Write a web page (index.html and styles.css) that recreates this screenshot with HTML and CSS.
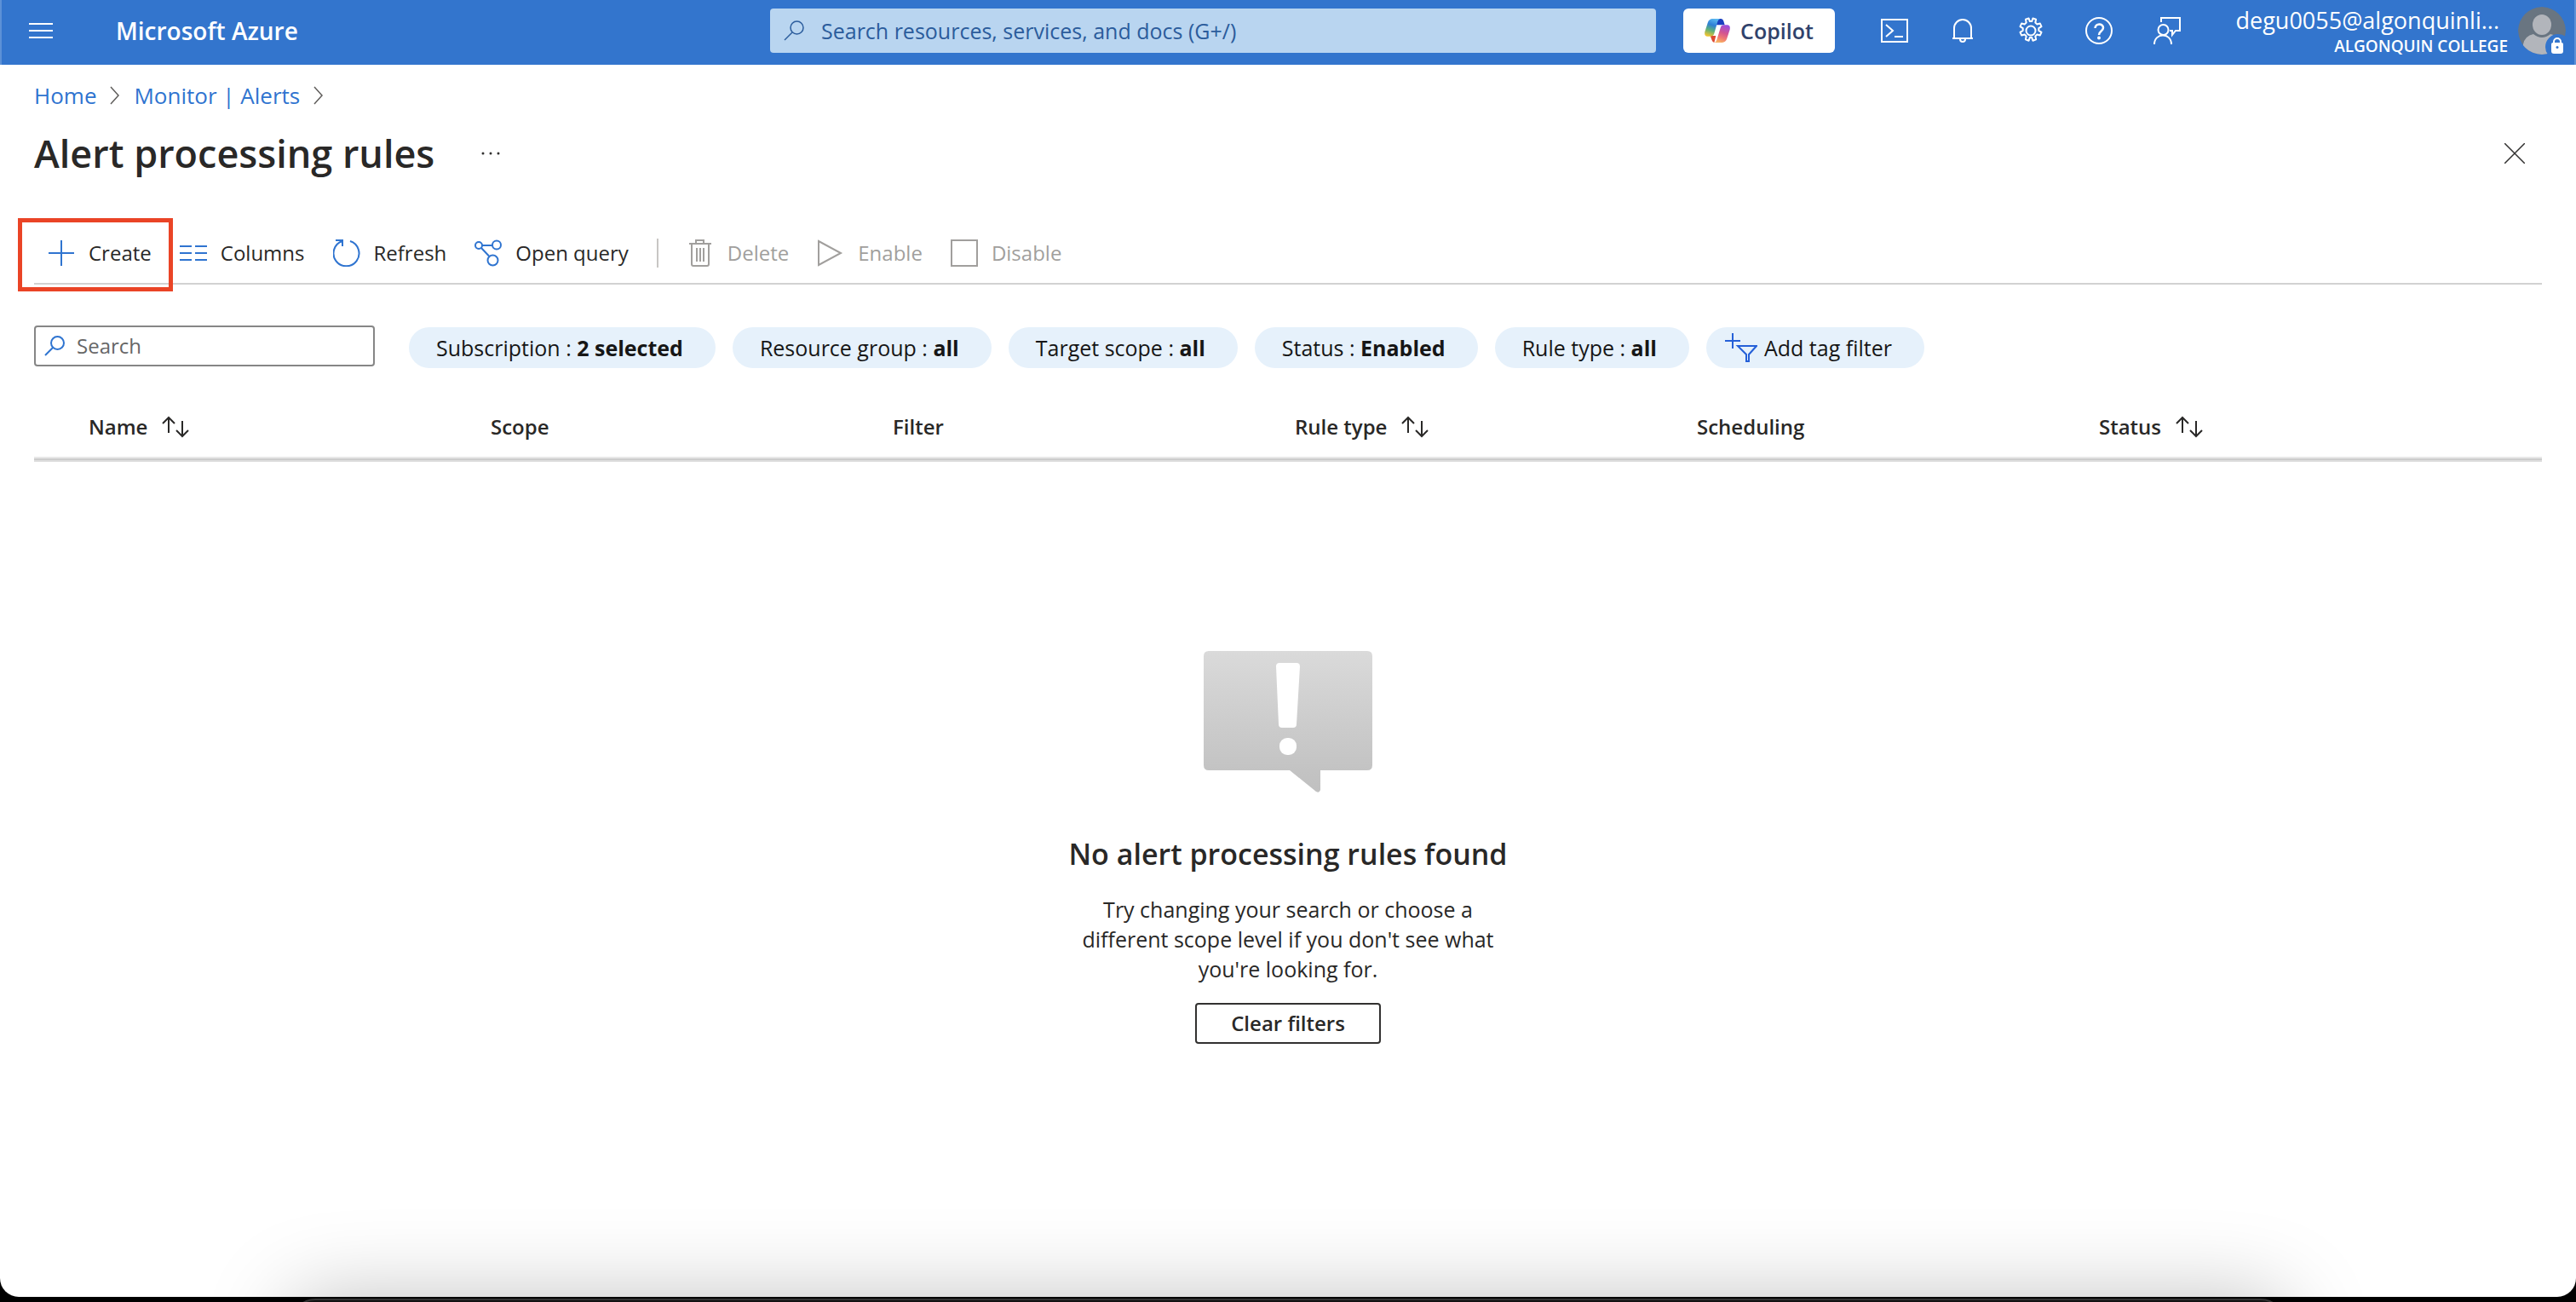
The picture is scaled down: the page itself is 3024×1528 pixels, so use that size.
FILE: index.html
```html
<!DOCTYPE html>
<html lang="en">
<head>
<meta charset="utf-8">
<title>Alert processing rules - Microsoft Azure</title>
<link rel="stylesheet" href="styles.css">
</head>
<body>
<div class="window">
  <header class="topbar">
    <div class="topbar-start">
      <button class="menu-button" type="button" aria-label="Show portal menu">
        <svg width="28" height="18" viewBox="0 0 28 18" stroke="#fff" stroke-width="2"><path d="M0 1h28M0 9h28M0 17h28"/></svg>
      </button>
      <a class="brand" href="#">Microsoft Azure</a>
    </div>
    <label class="global-search">
      <svg width="24" height="24" viewBox="0 0 24 24" fill="none" stroke="#2b5c9c" stroke-width="1.5"><circle cx="15.500" cy="8.500" r="7.500"/><path d="M10 14L1 23"/></svg>
      <input type="text" placeholder="Search resources, services, and docs (G+/)" aria-label="Search resources, services, and docs">
    </label>
    <button class="copilot" type="button">
      <svg width="30" height="28" viewBox="0 0 90 84">
        <defs>
          <linearGradient id="cp-left" x1="0.600" y1="0" x2="0.300" y2="1"><stop offset="0" stop-color="#59b7f0"/><stop offset=".35" stop-color="#2f7fd6"/><stop offset=".65" stop-color="#5bb07c"/><stop offset="1" stop-color="#f0c431"/></linearGradient>
          <linearGradient id="cp-right" x1="0.700" y1="0" x2="0.400" y2="1"><stop offset="0" stop-color="#9a4fe0"/><stop offset=".45" stop-color="#d4548f"/><stop offset=".75" stop-color="#f07a72"/><stop offset="1" stop-color="#f8b263"/></linearGradient>
        </defs>
        <path d="M44 0h14q7 0 9 8l4 14H42z" fill="#1b3fc0"/>
        <path d="M20 60h20l-6 24q-6-1-8-8z" fill="#dd4a33"/>
        <path d="M28 0h27q-7 2-9 10L34 52q-3 10-12 10H10Q-2 61 1 46L12 12Q16 1 28 0z" fill="url(#cp-left)"/>
        <path d="M62 84H35q6-2 8-10L56 32q3-10 12-10h12q12 1 9 16L78 72q-4 11-16 12z" fill="url(#cp-right)"/>
      </svg>
      <span>Copilot</span>
    </button>
    <nav class="topbar-icons" aria-label="Portal tools">
      <button type="button" aria-label="Cloud Shell">
        <svg width="32" height="32" viewBox="0 0 32 32" fill="none" stroke="#fff" stroke-width="2"><path d="M1 3h30v26H1z"/><path d="M6 9l8 7-8 7M16 23h10"/></svg>
      </button>
      <button type="button" aria-label="Notifications">
        <svg width="32" height="32" viewBox="0 0 32 32" fill="none" stroke="#fff" stroke-width="2"><path d="M4 25h24M6 25V13a10 10 0 0 1 20 0v12M13 26a3 3 0 0 0 6 0"/></svg>
      </button>
      <button type="button" aria-label="Settings">
        <svg width="32" height="32" viewBox="0 0 32 32" fill="none" stroke="#fff" stroke-width="2" stroke-linejoin="round"><path d="M13.600 1.500l1.200 3.600h2.400l1.200-3.600 3.700 1.300-.8 3.700 1.900 1.900 3.700-.8 1.600 3.500-3.200 2.100v2.600l3.200 2.100-1.600 3.500-3.700-.8-1.900 1.900.8 3.700-3.700 1.500-1.200-3.600h-2.400l-1.200 3.600-3.700-1.500.8-3.700-1.900-1.900-3.700.8-1.600-3.500 3.200-2.100v-2.600l-3.200-2.100 1.600-3.500 3.700.8 1.900-1.900-.8-3.700z"/><circle cx="16" cy="16" r="5.500"/></svg>
      </button>
      <button type="button" aria-label="Help">
        <svg width="32" height="32" viewBox="0 0 32 32" fill="none" stroke="#fff"><circle cx="16" cy="16" r="15" stroke-width="2"/><path d="M11.500 13c0-6 9.500-6 9.500-.5 0 4-5 4-5 8.500" stroke-width="2.500"/><circle cx="16" cy="24.500" r="2" fill="#fff" stroke="none"/></svg>
      </button>
      <button type="button" aria-label="Feedback">
        <svg width="32" height="32" viewBox="0 0 32 32" fill="none" stroke="#fff" stroke-width="2"><path d="M9 6V1h22v15h-5l-4 5v-5h-3"/><circle cx="11.500" cy="15" r="6"/><path d="M1 32c0-14 20-14 20 0"/></svg>
      </button>
    </nav>
    <button class="account" type="button">
      <span class="account-text">
        <span class="account-mail">degu0055@algonquinli...</span>
        <span class="account-org">ALGONQUIN COLLEGE</span>
      </span>
      <svg width="56" height="56" viewBox="0 0 56 56">
        <defs><clipPath id="avatar-clip"><circle cx="28" cy="28" r="28"/></clipPath></defs>
        <g clip-path="url(#avatar-clip)">
          <circle cx="28" cy="28" r="28" fill="#697581"/>
          <path d="M6 56V44q2-10 12-12 10 8 20 0 12 2 13 12v12z" fill="#b2b5bb"/>
          <circle cx="28" cy="21" r="13" fill="#697581"/>
          <ellipse cx="28" cy="21" rx="11" ry="12" fill="#b2b5bb"/>
        </g>
        <circle cx="47" cy="47" r="15" fill="#3375cd"/>
        <path d="M39 44q0-2 2-2h10q2 0 2 2v8q0 3-3 3h-8q-3 0-3-3z" fill="#fff"/>
        <path d="M42 43v-2a4 4 0 0 1 8 0v2" fill="none" stroke="#fff" stroke-width="2"/>
        <circle cx="46" cy="47.500" r="1.500" fill="#3375cd"/>
      </svg>
    </button>
  </header>

  <main class="blade">
    <nav class="breadcrumb" aria-label="Breadcrumb">
      <a href="#">Home</a>
      <svg width="12" height="22" viewBox="0 0 12 22" fill="none" stroke="#605e5c" stroke-width="1.500"><path d="M1 1l9 10-9 10"/></svg>
      <a href="#">Monitor | Alerts</a>
      <svg width="12" height="22" viewBox="0 0 12 22" fill="none" stroke="#605e5c" stroke-width="1.500"><path d="M1 1l9 10-9 10"/></svg>
    </nav>

    <div class="title-row">
      <h1>Alert processing rules</h1>
      <button class="more" type="button" aria-label="More">
        <svg width="24" height="4" viewBox="0 0 24 4" fill="#323130"><circle cx="3" cy="2" r="1.500"/><circle cx="12" cy="2" r="1.500"/><circle cx="21" cy="2" r="1.500"/></svg>
      </button>
      <button class="close" type="button" aria-label="Close">
        <svg width="24" height="24" viewBox="0 0 24 24" stroke="#323130" stroke-width="1.500"><path d="M0 0l24 24M24 0L0 24"/></svg>
      </button>
    </div>

    <div class="toolbar" role="toolbar" aria-label="Commands">
      <button class="command highlighted" type="button">
        <svg width="32" height="32" viewBox="0 0 32 32" stroke="#2f74d0" stroke-width="2"><path d="M1 16h30M16 1v30"/></svg>
        Create
      </button>
      <button class="command" type="button">
        <svg width="32" height="32" viewBox="0 0 32 32" stroke="#2f74d0" stroke-width="2"><path d="M0 8h14M18 8h14M0 16h14M18 16h14M0 24h14M18 24h14"/></svg>
        Columns
      </button>
      <button class="command" type="button">
        <svg width="32" height="32" viewBox="0 0 32 32" fill="none" stroke="#2f74d0" stroke-width="2"><path d="M20 2A15 15 0 1 1 11 2M3 1h8v7"/></svg>
        Refresh
      </button>
      <button class="command" type="button">
        <svg width="32" height="32" viewBox="0 0 32 32" fill="none" stroke="#2f74d0" stroke-width="2"><circle cx="5" cy="7" r="4"/><circle cx="26" cy="6.500" r="5"/><circle cx="21.500" cy="24.500" r="6"/><path d="M9 7h12M8 10l9 9.500"/></svg>
        Open query
      </button>
      <span class="divider"></span>
      <button class="command" type="button" disabled>
        <svg width="32" height="32" viewBox="0 0 32 32" fill="none" stroke="#a19f9d" stroke-width="2"><path d="M3 5h26M11 5V1h9v4M6 5v24q0 2 2 2h16q2 0 2-2V5M12 10v16M16 10v16M20 10v16"/></svg>
        Delete
      </button>
      <button class="command" type="button" disabled>
        <svg width="32" height="32" viewBox="0 0 32 32" fill="none" stroke="#a19f9d" stroke-width="2"><path d="M2 2l26 14L2 30z"/></svg>
        Enable
      </button>
      <button class="command" type="button" disabled>
        <svg width="32" height="32" viewBox="0 0 32 32" fill="none" stroke="#a19f9d" stroke-width="2"><path d="M1 1h30v30H1z"/></svg>
        Disable
      </button>
    </div>

    <div class="filters">
      <label class="filter-search">
        <svg width="24" height="24" viewBox="0 0 24 24" fill="none" stroke="#2f74d0" stroke-width="2"><circle cx="15.500" cy="8.500" r="7.500"/><path d="M10 14L1 23"/></svg>
        <input type="text" placeholder="Search" aria-label="Search rules">
      </label>
      <button class="pill" type="button">Subscription : <b>2 selected</b></button>
      <button class="pill" type="button">Resource group : <b>all</b></button>
      <button class="pill" type="button">Target scope : <b>all</b></button>
      <button class="pill" type="button">Status : <b>Enabled</b></button>
      <button class="pill" type="button">Rule type : <b>all</b></button>
      <button class="pill pill-add" type="button">
        <svg width="38" height="36" viewBox="0 0 38 36" fill="none" stroke="#2560d8" stroke-width="2"><path d="M0 10h18M9 1v18M15 16h22l-9 10v8h-3v-8z"/></svg>
        Add tag filter
      </button>
    </div>

    <table class="rules">
      <thead>
        <tr>
          <th scope="col"><span>Name <svg width="34" height="26" viewBox="0 0 34 26"><path d="M9 20V2M2 9l7-7 7 7M25 6v18M18 17l7 7 7-7"/></svg></span></th>
          <th scope="col"><span>Scope</span></th>
          <th scope="col"><span>Filter</span></th>
          <th scope="col"><span>Rule type <svg width="34" height="26" viewBox="0 0 34 26"><path d="M9 20V2M2 9l7-7 7 7M25 6v18M18 17l7 7 7-7"/></svg></span></th>
          <th scope="col"><span>Scheduling</span></th>
          <th scope="col"><span>Status <svg width="34" height="26" viewBox="0 0 34 26"><path d="M9 20V2M2 9l7-7 7 7M25 6v18M18 17l7 7 7-7"/></svg></span></th>
        </tr>
      </thead>
    </table>

    <section class="empty">
      <svg width="198" height="166" viewBox="0 0 198 166">
        <defs><linearGradient id="bubble" x1="0" y1="0" x2="0" y2="1"><stop offset="0" stop-color="#dadada"/><stop offset=".85" stop-color="#c3c3c3"/><stop offset="1" stop-color="#c0c0c0"/></linearGradient></defs>
        <path d="M6 0h186q6 0 6 6v128q0 6-6 6h-55v23q-1 4-5 2l-31-25H6q-6 0-6-6V6q0-6 6-6z" fill="url(#bubble)"/>
        <path d="M89 14h20q4 0 4 4l-4 68q0 4-4 4H92q-4 0-4-4l-3-68q0-4 4-4z" fill="#fff"/>
        <rect x="89" y="102" width="20" height="20" rx="9" fill="#fff"/>
      </svg>
      <h2>No alert processing rules found</h2>
      <p>Try changing your search or choose a different scope level if you don't see what you're looking for.</p>
      <button class="clear" type="button">Clear filters</button>
    </section>
  </main>
</div>
<div class="dock"></div>
</body>
</html>
```
FILE: styles.css
```css
* {
  box-sizing: border-box;
}

html {
  background: #000;
}

body {
  margin: 0;
  min-height: 100vh;
  padding-bottom: 6px;
  display: flex;
  flex-direction: column;
  color: #292827;
  font: 24px/36px "Open Sans", "Noto Sans", sans-serif;
}

button,
input {
  margin: 0;
  padding: 0;
  border: 0;
  background: none;
  color: inherit;
  font: inherit;
}

a {
  color: inherit;
  text-decoration: none;
}

svg {
  display: block;
  flex: none;
}

.window {
  flex: 1;
  overflow: hidden;
  border-radius: 0 0 22px 22px;
  background: #fff;
}

/* Top bar */
.topbar {
  display: flex;
  align-items: center;
  height: 76px;
  background: #3375cd;
  box-shadow: inset 2px 0 #5c91d7, inset -2px 0 #5c91d7;
  color: #fff;
}

.topbar-start {
  flex: 1;
  display: flex;
  align-items: center;
  gap: 74px;
  padding: 0 0 4px 34px;
}

.brand {
  font-size: 28px;
  font-weight: 600;
}

.global-search {
  flex: 0 1 1040px;
  display: flex;
  align-items: center;
  gap: 20px;
  height: 52px;
  margin-bottom: 4px;
  padding: 0 16px;
  border-radius: 4px;
  background: #b9d5f0;
  font-size: 25px;
}

.global-search input {
  flex: 1;
  color: #2b5c9c;
}

.global-search input::placeholder {
  color: #2b5c9c;
  opacity: 1;
}

.copilot {
  display: flex;
  align-items: center;
  justify-content: center;
  gap: 12px;
  width: 178px;
  height: 52px;
  margin: 0 30px 4px 32px;
  border-radius: 6px;
  background: #fff;
  color: #30426c;
  font-size: 25px;
  font-weight: 600;
}

.topbar-icons {
  display: flex;
  margin-bottom: 4px;
}

.topbar-icons button {
  display: flex;
  justify-content: center;
  width: 80px;
}

.account {
  display: flex;
  align-items: center;
  gap: 12px;
  margin-bottom: 4px;
  padding-right: 12px;
  text-align: right;
}

.account-text {
  display: flex;
  flex-direction: column;
  width: 360px;
  padding-top: 4px;
}

.account-mail {
  padding-right: 10px;
  font-size: 27px;
  line-height: 32px;
}

.account-org {
  font-size: 19px;
  font-weight: 600;
  line-height: 28px;
}

/* Blade */
.blade {
  padding: 18px 40px 0;
}

.breadcrumb {
  display: flex;
  align-items: center;
  gap: 16px;
  color: #2f74d0;
  font-size: 26px;
}

.title-row {
  display: flex;
  align-items: center;
  margin-top: 18px;
}

h1 {
  margin: 0;
  font-size: 45px;
  font-weight: 600;
  line-height: 64px;
}

.more {
  margin-left: 54px;
}

.close {
  margin-left: auto;
  margin-right: 20px;
}

.toolbar {
  display: flex;
  align-items: center;
  gap: 1px;
  height: 76px;
  margin-top: 46px;
  padding-top: 3px;
  border-bottom: 2px solid #d2d2d2;
}

.command {
  position: relative;
  display: flex;
  align-items: center;
  gap: 16px;
  padding: 0 16px;
}

.command:disabled {
  color: #a19f9d;
}

/* Callout frame around the command to press */
.highlighted::after {
  content: "";
  position: absolute;
  inset: -23px -9px -27px -19px;
  border: 5px solid #ea4426;
}

.divider {
  width: 2px;
  height: 34px;
  margin: 0 16px;
  background: #c8c6c4;
}

.filters {
  display: flex;
  align-items: flex-end;
  gap: 20px;
  margin-top: 48px;
}

.filter-search {
  display: flex;
  align-items: center;
  gap: 14px;
  width: 400px;
  height: 48px;
  margin: 0 20px 2px 0;
  padding: 0 10px;
  border: 2px solid #868686;
  border-radius: 4px;
}

.filter-search input {
  flex: 1;
  min-width: 0;
}

.filter-search input::placeholder {
  color: #666;
  opacity: 1;
}

.pill {
  height: 48px;
  padding: 0 38px 0 32px;
  border-radius: 24px;
  background: #e6f1fb;
  color: #161616;
  font-size: 25px;
}

.pill-add {
  display: flex;
  align-items: center;
  gap: 8px;
  padding-left: 22px;
}

.rules {
  width: 100%;
  margin-top: 36px;
  padding-left: 64px;
  border-spacing: 0;
  border-bottom: 2px solid #ddd;
  box-shadow: inset 0 -2px #ccc, inset 0 -4px #e8e8e8;
  table-layout: fixed;
}

.rules th {
  width: 472px;
  height: 72px;
  padding: 0 0 6px;
  font-weight: 600;
  text-align: left;
}

.rules th:last-child {
  width: auto;
}

.rules span {
  display: flex;
  align-items: center;
  gap: 16px;
}

.rules path {
  fill: none;
  stroke: #292827;
  stroke-width: 2;
}

.empty {
  display: flex;
  flex-direction: column;
  align-items: center;
  padding: 222px 0 40px;
  text-align: center;
}

h2 {
  margin: 48px 0 0;
  font-size: 34px;
  font-weight: 600;
  line-height: 48px;
}

.empty p {
  width: 500px;
  margin: 24px 0 0;
  font-size: 25px;
  line-height: 35px;
}

.clear {
  width: 218px;
  height: 48px;
  margin-top: 22px;
  border: 2px solid #323130;
  border-radius: 4px;
  font-weight: 600;
}

/* Desktop dock peeking in under the window, casting its shadow on it */
.dock {
  position: fixed;
  right: 342px;
  bottom: -196px;
  left: 342px;
  height: 200px;
  border: 2px solid #333;
  border-radius: 28px;
  background: #111;
  box-shadow: 0 0 100px rgba(0, 0, 0, 0.25);
}
```
